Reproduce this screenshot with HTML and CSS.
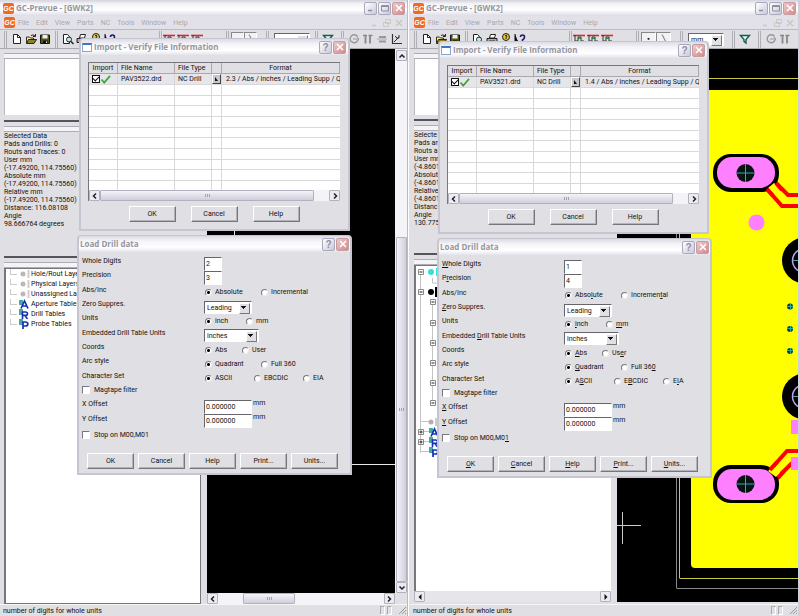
FILE: index.html
```html
<!DOCTYPE html>
<html lang="en">
<head>
<meta charset="utf-8">
<title>GC-Prevue</title>
<link rel="stylesheet" href="styles.css">
</head>
<body>
<svg class="defs" aria-hidden="true">
  <symbol id="new" viewBox="0 0 12 12"><path d="M2.5 1.5h4l3 3v6h-7z" fill="#fff" stroke="#222"/><path d="M6.500 1.500v3h3" fill="none" stroke="#222"/></symbol>
  <symbol id="open" viewBox="0 0 12 12"><path d="M1.500 10V4h3l1 1h3v2" fill="#ffe97a" stroke="#333"/><path d="M1.500 10.500l2-4h8l-2.500 4z" fill="#8c8420" stroke="#222"/><path d="M6 2.500q2-1.500 4 .5M10.500 1v2.500H8" fill="none" stroke="#222"/></symbol>
  <symbol id="save" viewBox="0 0 12 12"><path d="M1.500 2h9v8.500h-9z" fill="#555518" stroke="#111"/><path d="M3.500 2h5v3.500h-5z" fill="#eee"/><path d="M4 7.500h4.500v3H4z" fill="#111"/><path d="M7 8.500h1v1.500H7z" fill="#eee"/></symbol>
  <symbol id="preview" viewBox="0 0 12 12"><path d="M1.500 1.500h4l2 2v7h-6z" fill="#fff" stroke="#222"/><circle cx="7" cy="6.500" r="2.500" fill="#bfe6ea" stroke="#222"/><path d="M9 8.500l2.500 2.500" stroke="#222" stroke-width="1.500"/></symbol>
  <symbol id="print" viewBox="0 0 12 12"><path d="M3.500 5l1-3.500h5L8.500 5z" fill="#fff" stroke="#222"/><path d="M1 5.500h10v4H1z" fill="#aaa" stroke="#222"/><path d="M3 8h6" stroke="#333"/></symbol>
  <symbol id="about" viewBox="0 0 12 12"><circle cx="6" cy="4" r="3.500" fill="#e1c93a" stroke="#222"/><path d="M5 3q1-1.500 2 0L6 5v1" fill="none" stroke="#222"/><path d="M4 9h4v2H4z" fill="#222"/></symbol>
  <symbol id="help" viewBox="0 0 12 12"><path d="M1 1v8l2-2 2 4" fill="#111" stroke="#111"/><path d="M6.500 4q0-2 2-2t2 2-2 3v1M8.500 9v1.500" fill="none" stroke="#18186e" stroke-width="1.600"/></symbol>
  <symbol id="layer" viewBox="0 0 12 12"><path d="M0 2.500h12" stroke="#e0262c" stroke-width="1.600"/><path d="M2 2v6h3V4h3v4h3" fill="none" stroke="#333"/><path d="M5 5.500h3" stroke="#1c8b3c"/></symbol>
  <symbol id="filter" viewBox="0 0 12 12"><path d="M1.500 2.500h9l-3.500 4v3.500l-2-1.500v-2z" fill="#dff" stroke="#165a52" stroke-width="1.400"/></symbol>
  <symbol id="rotate" viewBox="0 0 12 12"><path d="M9.500 3.500a4 4 0 1 0 .5 3.500" fill="none" stroke="#999" stroke-width="1.400"/><path d="M5 6h6M9 4l2 2-2 2" fill="none" stroke="#999"/></symbol>
  <symbol id="mirror" viewBox="0 0 12 12"><path d="M1 2.500h4M6.500 2.500h4" stroke="#888" stroke-width="1.500"/><path d="M3.500 2v8.500M8 2v8.500" stroke="#888" stroke-width="1.800"/></symbol>
  <symbol id="flip" viewBox="0 0 12 12"><path d="M3 4h7M3 8.500h7" stroke="#999" stroke-width="2"/><path d="M1 6h10" stroke="#aaa"/></symbol>
  <symbol id="axes" viewBox="0 0 12 12"><path d="M2.500 1v9.500H12" fill="none" stroke="#333" stroke-width="1.200"/><path d="M4 9l5-5M5 3l3 3M9 2v3H6" fill="none" stroke="#333"/></symbol>
  <symbol id="leaf" viewBox="0 0 12 10"><circle cx="5" cy="5" r="2.500" fill="#b8b8b8"/><path d="M10.500 1v8" stroke="#dcc8c8" stroke-width="2"/></symbol>
  <symbol id="tab-a" viewBox="0 0 12 10"><path d="M1 1h4v5H1z" fill="#48a8a0"/><path d="M3 9.500L6.500 2l3.500 7.500M4.500 7h4" fill="none" stroke="#1530b4" stroke-width="1.700"/></symbol>
  <symbol id="tab-r" viewBox="0 0 12 10"><path d="M1 0h4v6H1z" fill="#48a8a0"/><path d="M4.500 10V3h3q2 0 2 1.700t-2 1.700h-3M7 6.500L9.500 10" fill="none" stroke="#1530b4" stroke-width="1.600"/></symbol>
  <symbol id="tab-p" viewBox="0 0 12 10"><path d="M1 0h4v6H1z" fill="#48a8a0"/><path d="M5 10V3h2.500q2.300 0 2.300 2T7.500 7H5" fill="none" stroke="#1530b4" stroke-width="1.700"/></symbol>
  <symbol id="left" viewBox="0 0 8 8"><path d="M5 1.500L2.500 4 5 6.500" fill="none" stroke="#222" stroke-width="1.500"/></symbol>
  <symbol id="right" viewBox="0 0 8 8"><path d="M3 1.500L5.500 4 3 6.500" fill="none" stroke="#222" stroke-width="1.500"/></symbol>
  <symbol id="solid-left" viewBox="0 0 8 8"><path d="M5.500 1v6L2.500 4z" fill="#111"/></symbol>
  <symbol id="solid-right" viewBox="0 0 8 8"><path d="M2.500 1v6L5.500 4z" fill="#111"/></symbol>
  <symbol id="up" viewBox="0 0 8 8"><path d="M1.500 5.500L4 3l2.500 2.500" fill="none" stroke="#222" stroke-width="1.500"/></symbol>
  <symbol id="down" viewBox="0 0 8 8"><path d="M1.500 2.500L4 5l2.500-2.500" fill="none" stroke="#222" stroke-width="1.500"/></symbol>
  <symbol id="min" viewBox="0 0 10 10"><path d="M2 7.500h4" stroke="currentColor" stroke-width="1.500"/></symbol>
  <symbol id="max" viewBox="0 0 10 10"><path d="M1.500 2.500h7v5.500h-7zM1.500 3.500h7" fill="none" stroke="currentColor"/></symbol>
  <symbol id="restore" viewBox="0 0 10 10"><path d="M3.500 1.500h5v4h-5zM1.500 4.500h5v4h-5z" fill="none" stroke="currentColor"/></symbol>
  <symbol id="close" viewBox="0 0 10 10"><path d="M2 2l6 6M8 2L2 8" stroke="currentColor" stroke-width="1.600"/></symbol>
  <symbol id="tick" viewBox="0 0 12 10"><path d="M1 5l3 3.500L10.500 1" fill="none" stroke="#3aa535" stroke-width="1.800"/></symbol>
  <symbol id="drill" viewBox="-12 -12 24 24"><circle r="9" fill="#061414"/><path d="M-9 0H9M0-9V9" stroke="#3fa3a8"/></symbol>
</svg>
<main class="desktop">

<section class="app app-first">
  <header class="titlebar"><span class="logo">GC</span><h1>GC-Prevue - [GWK2]</h1>
    <button class="cap" aria-label="Minimize"><svg><use href="#min"/></svg></button><button class="cap" aria-label="Maximize"><svg><use href="#max"/></svg></button><button class="cap cap-close" aria-label="Close"><svg><use href="#close"/></svg></button></header>
  <nav class="menubar"><span class="logo">GC</span><a href="#">File</a><a href="#">Edit</a><a href="#">View</a><a href="#">Parts</a><a href="#">NC</a><a href="#">Tools</a><a href="#">Window</a><a href="#">Help</a>
    <span class="mdi"><svg><use href="#min"/></svg><svg><use href="#restore"/></svg><svg><use href="#close"/></svg></span></nav>
  <div class="toolbar">
    <div class="tools"><button aria-label="New"><svg><use href="#new"/></svg></button><button aria-label="Open"><svg><use href="#open"/></svg></button><button aria-label="Save"><svg><use href="#save"/></svg></button></div>
    <div class="tools tools-file"><button aria-label="Preview"><svg><use href="#preview"/></svg></button><button aria-label="Print"><svg><use href="#print"/></svg></button><button aria-label="About"><svg><use href="#about"/></svg></button><button aria-label="Help"><svg><use href="#help"/></svg></button></div>
    <div class="tools tools-layers"><button aria-label="Layer 1"><svg><use href="#layer"/></svg></button><button aria-label="Layer 2"><svg><use href="#layer"/></svg></button><button aria-label="Layer 3"><svg><use href="#layer"/></svg></button></div>
    <div class="tools tools-shape"><button class="toggle" aria-label="Pad">&#9642;</button><button class="toggle" aria-label="Line">&#9586;</button></div>
    <div class="tools tools-unit"><span class="drop"><select aria-label="Unit"><option>mm</option></select></span></div>
    <div class="tools tools-filter"><button aria-label="Filter"><svg><use href="#filter"/></svg></button></div>
    <div class="tools"><button aria-label="Rotate"><svg><use href="#rotate"/></svg></button><button aria-label="Mirror"><svg><use href="#mirror"/></svg></button><button aria-label="Flip"><svg><use href="#flip"/></svg></button><button aria-label="Axes"><svg><use href="#axes"/></svg></button></div>
  </div>
  <div class="work">
    <aside class="side">
      <div class="pane pane-view"><div class="view"></div></div>
      <div class="pane pane-info"><p>Selected Data<br>Pads and Drills: 0<br>Routs and Traces: 0<br>User mm<br>(-17.49200, 114.75560)<br>Absolute mm<br>(-17.49200, 114.75560)<br>Relative mm<br>(-17.49200, 114.75560)<br>Distance: 116.08108<br>Angle<br>98.666764 degrees</p></div>
      <div class="pane pane-tree"><ul class="tree">
        <li><svg><use href="#leaf"/></svg>Hole/Rout Laye</li>
        <li><svg><use href="#leaf"/></svg>Physical Layers</li>
        <li><svg><use href="#leaf"/></svg>Unassigned La</li>
        <li><svg><use href="#tab-a"/></svg>Aperture Tables</li>
        <li><svg><use href="#tab-r"/></svg>Drill Tables</li>
        <li><svg><use href="#tab-p"/></svg>Probe Tables</li>
      </ul></div>
    </aside>
    <div class="board">
      <svg class="plot"><g transform="translate(-207 -49)" stroke="#e8e8e8"><path d="M207 464.500H396M234.500 49V464"/></g></svg>
      <div class="bar bar-v"><button aria-label="Scroll up"><svg><use href="#up"/></svg></button><i class="track"></i><i class="thumb"></i><button aria-label="Scroll down"><svg><use href="#down"/></svg></button></div>
      <div class="bar bar-h"><button aria-label="Scroll left"><svg><use href="#left"/></svg></button><i class="track"></i><i class="thumb"></i><i class="track track-rest"></i><button aria-label="Scroll right"><svg><use href="#right"/></svg></button></div>
    </div>
  </div>
  <footer class="status"><span>number of digits for whole units</span><i class="cell"></i><i class="cell"></i><svg class="grip"><path d="M1 8l7-7M4 8l4-4M7 8l1-1" stroke="#999"/></svg></footer>

  <section class="dialog import">
    <header class="dialog-title"><i class="form-icon"></i><h2>Import - Verify File Information</h2><button class="cap cap-help" aria-label="Help">?</button><button class="cap cap-close" aria-label="Close"><svg><use href="#close"/></svg></button></header>
    <div class="list">
      <div class="rows"><table>
        <thead><tr><th class="c1">Import</th><th class="c2">File Name</th><th class="c3">File Type</th><th class="c4"></th><th class="c5">Format</th></tr></thead>
        <tbody>
          <tr class="file"><td><input type="checkbox" class="mark" aria-label="Import PAV3522.drd" checked><svg class="tick"><use href="#tick"/></svg></td><td>PAV3522.drd</td><td>NC Drill</td><td><button class="more" aria-label="Edit format"></button></td><td>2.3 / Abs / inches / Leading Supp / Q</td></tr>
          <tr><td></td><td></td><td></td><td></td><td></td></tr><tr><td></td><td></td><td></td><td></td><td></td></tr><tr><td></td><td></td><td></td><td></td><td></td></tr><tr><td></td><td></td><td></td><td></td><td></td></tr><tr><td></td><td></td><td></td><td></td><td></td></tr><tr><td></td><td></td><td></td><td></td><td></td></tr><tr><td></td><td></td><td></td><td></td><td></td></tr><tr><td></td><td></td><td></td><td></td><td></td></tr><tr><td></td><td></td><td></td><td></td><td></td></tr><tr><td></td><td></td><td></td><td></td><td></td></tr>
        </tbody>
      </table></div>
      <div class="bar bar-h list-bar"><button aria-label="Scroll left"><svg><use href="#left"/></svg></button><i class="thumb"></i><i class="track"></i><button aria-label="Scroll right"><svg><use href="#right"/></svg></button></div>
    </div>
    <div class="actions"><button class="push">OK</button><button class="push">Cancel</button><button class="push">Help</button></div>
  </section>

  <section class="dialog load">
    <header class="dialog-title"><h2>Load Drill data</h2><button class="cap cap-help" aria-label="Help">?</button><button class="cap cap-close" aria-label="Close"><svg><use href="#close"/></svg></button></header>
    <form class="fields">
      <label for="a-whole">Whole Digits</label><div class="ctl"><input class="text digit" id="a-whole" value="2"></div>
      <label for="a-prec">Precision</label><div class="ctl"><input class="text digit" id="a-prec" value="3"></div>
      <span>Abs/Inc</span><div class="ctl opts opts-wide"><label><input type="radio" name="a-abs" checked>Absolute</label><label><input type="radio" name="a-abs">Incremental</label></div>
      <label for="a-zero">Zero Suppres.</label><div class="ctl"><span class="drop drop-zero"><select id="a-zero"><option>Leading</option></select></span></div>
      <span>Units</span><div class="ctl opts opts-mid"><label><input type="radio" name="a-unit" checked>inch</label><label><input type="radio" name="a-unit">mm</label></div>
      <label for="a-tab">Embedded Drill Table Units</label><div class="ctl"><span class="drop drop-units"><select id="a-tab"><option>inches</option></select></span></div>
      <span>Coords</span><div class="ctl opts opts-thin"><label><input type="radio" name="a-co" checked>Abs</label><label><input type="radio" name="a-co">User</label></div>
      <span>Arc style</span><div class="ctl opts opts-wide"><label><input type="radio" name="a-arc" checked>Quadrant</label><label><input type="radio" name="a-arc">Full 360</label></div>
      <span>Character Set</span><div class="ctl opts opts-three"><label><input type="radio" name="a-set" checked>ASCII</label><label><input type="radio" name="a-set">EBCDIC</label><label><input type="radio" name="a-set">EIA</label></div>
      <label class="check"><input type="checkbox" class="box">Magtape filter</label>
      <label for="a-x">X Offset</label><div class="ctl"><input class="text amount" id="a-x" value="0.000000"><span class="unit">mm</span></div>
      <label for="a-y">Y Offset</label><div class="ctl"><input class="text amount" id="a-y" value="0.000000"><span class="unit">mm</span></div>
      <label class="check check-stop"><input type="checkbox" class="box">Stop on M00,M01</label>
    </form>
    <div class="actions"><button class="push">OK</button><button class="push">Cancel</button><button class="push">Help</button><button class="push">Print...</button><button class="push">Units...</button></div>
  </section>
</section>

<section class="app app-second">
  <header class="titlebar"><span class="logo">GC</span><h1>GC-Prevue - [GWK2]</h1>
    <button class="cap" aria-label="Minimize"><svg><use href="#min"/></svg></button><button class="cap" aria-label="Maximize"><svg><use href="#max"/></svg></button><button class="cap cap-close" aria-label="Close"><svg><use href="#close"/></svg></button></header>
  <nav class="menubar"><span class="logo">GC</span><a href="#">File</a><a href="#">Edit</a><a href="#">View</a><a href="#">Parts</a><a href="#">NC</a><a href="#">Tools</a><a href="#">Window</a><a href="#">Help</a>
    <span class="mdi"><svg><use href="#min"/></svg><svg><use href="#restore"/></svg><svg><use href="#close"/></svg></span></nav>
  <div class="toolbar">
    <div class="tools"><button aria-label="New"><svg><use href="#new"/></svg></button><button aria-label="Open"><svg><use href="#open"/></svg></button><button aria-label="Save"><svg><use href="#save"/></svg></button></div>
    <div class="tools tools-file"><button aria-label="Preview"><svg><use href="#preview"/></svg></button><button aria-label="Print"><svg><use href="#print"/></svg></button><button aria-label="About"><svg><use href="#about"/></svg></button><button aria-label="Help"><svg><use href="#help"/></svg></button></div>
    <div class="tools tools-layers"><button aria-label="Layer 1"><svg><use href="#layer"/></svg></button><button aria-label="Layer 2"><svg><use href="#layer"/></svg></button><button aria-label="Layer 3"><svg><use href="#layer"/></svg></button></div>
    <div class="tools tools-shape"><button class="toggle" aria-label="Pad">&#9642;</button><button class="toggle" aria-label="Line">&#9586;</button></div>
    <div class="tools tools-unit"><span class="drop"><select aria-label="Unit"><option>mm</option></select></span></div>
    <div class="tools tools-filter"><button aria-label="Filter"><svg><use href="#filter"/></svg></button></div>
    <div class="tools"><button aria-label="Rotate"><svg><use href="#rotate"/></svg></button><button aria-label="Mirror"><svg><use href="#mirror"/></svg></button></div>
  </div>
  <div class="work">
    <aside class="side">
      <div class="pane pane-view"><div class="view"></div></div>
      <div class="pane pane-info"><p>Selecte<br>Pads an<br>Routs a<br>User mm<br>(-4.8601<br>Absolut<br>(-4.8601<br>Relative<br>(-4.8601<br>Distanc<br>Angle<br>130.775</p></div>
      <div class="pane pane-tree">
        <svg class="branches">
          <g transform="translate(-2 0)">
          <g fill="none" stroke="#c4c4c4"><path d="M6.500 5v182M18.500 36v102M6 155.500h10M6 165.500h10M6 175.500h10M6 185.500h10M18.500 12v5h6"/></g>
          <circle cx="17" cy="6" r="3" fill="#35e0dc"/><path d="M22 2h3v8h-3z" fill="#35e0dc"/>
          <circle cx="17" cy="26" r="3"/><path d="M21 21h4v10h-4z"/>
          <circle cx="17" cy="156" r="2.500" fill="#b0b0b0"/><path d="M21 152h4v8h-4z" fill="#ccc"/>
          <g fill="#fff" stroke="#888"><path d="M4.500 3.500h5v5h-5zM4.500 23.500h5v5h-5zM16.500 33.500h5v5h-5zM16.500 54.500h5v5h-5zM16.500 74.500h5v5h-5zM16.500 94.500h5v5h-5zM16.500 114.500h5v5h-5zM16.500 134.500h5v5h-5zM4.500 163.500h5v5h-5zM4.500 173.500h5v5h-5z"/></g>
          <path stroke="#222" d="M5.500 6h3M5.500 26h3M17.500 36h3M17.500 57h3M17.500 77h3M17.500 97h3M17.500 117h3M17.500 137h3M5.500 166h3M7 164.500v3M5.500 176h3M7 174.500v3"/>
          <use href="#tab-a" x="14" y="161" width="12" height="10"/><use href="#tab-r" x="14" y="171" width="12" height="10"/><use href="#tab-p" x="14" y="181" width="12" height="10"/>
          </g>
        </svg>
        <div class="bar bar-h tree-bar"><button aria-label="Scroll left"><svg><use href="#solid-left"/></svg></button><i class="thumb plain"></i><button aria-label="Scroll right"><svg><use href="#solid-right"/></svg></button></div>
      </div>
    </aside>
    <div class="board">
      <svg class="plot"><g transform="translate(-617 -49)">
        <path d="M676.500 588.500H800M676.500 230V588" stroke="#8a8a8a" fill="none"/>
        <path d="M679.500 578.500H800M679.500 78.500V578M679.500 78.500H800" stroke="#c9c942" fill="none"/>
        <rect x="691" y="90" width="130" height="478" rx="4" fill="#ff0"/>
        <path d="M775 182l13 13h14M766 188l16 18h20M770 470l17-19h15M777 478l17-17h8" fill="none" stroke="#f00" stroke-width="4"/>
        <g><rect x="713" y="154" width="66" height="38" rx="18"/><rect x="717" y="157" width="58" height="31" rx="15" fill="#ff80ff"/><use href="#drill" x="733.500" y="161" width="24" height="24"/>
        <rect x="713" y="465" width="66" height="38" rx="18"/><rect x="717" y="469" width="58" height="31" rx="15" fill="#ff80ff"/><use href="#drill" x="733.500" y="472" width="24" height="24"/></g>
        <path d="M768 188l6-5 6 5-5 6zM768 471l6-5 6 7-4 4z" fill="#ff0"/>
        <path d="M776 183l6 7M767 189l6 7M770 470l7-8M778 478l6-7" stroke="#f00" stroke-width="4"/>
        <circle cx="756.500" cy="222.500" r="8" fill="#ff80ff"/>
        <circle cx="805" cy="260.500" r="23"/><circle cx="805" cy="396.500" r="23"/>
        <g fill="none" stroke="#b9a5ee" stroke-width="1.500"><ellipse cx="805" cy="260.500" rx="12.500" ry="12"/><ellipse cx="805" cy="396.500" rx="12.500" ry="12"/></g>
        <path d="M793 260.500h6M793 396.500h6" stroke="#3fa3a8"/>
        <g fill="#0b3f3c"><circle cx="790" cy="306.500" r="3"/><circle cx="790" cy="329" r="3"/><circle cx="790" cy="351" r="3"/></g>
        <path d="M787 306.500h6M790.500 303v7M787 328.500h6M790.500 326v6M787 350.500h6M790.500 348v6" stroke="#2ea89d"/>
        <path d="M791 420h8v14h-8zM791 457h8v13h-8z" fill="#ff80ff"/>
        <path d="M617 525.500h24M622.500 512v32" stroke="#ccc"/>
      </g></svg>
    </div>
  </div>
  <footer class="status"><span>number of digits for whole units</span><i class="cell"></i><i class="cell"></i><svg class="grip"><path d="M1 8l7-7M4 8l4-4M7 8l1-1" stroke="#999"/></svg></footer>

  <section class="dialog import">
    <header class="dialog-title"><i class="form-icon"></i><h2>Import - Verify File Information</h2><button class="cap cap-help" aria-label="Help">?</button><button class="cap cap-close" aria-label="Close"><svg><use href="#close"/></svg></button></header>
    <div class="list">
      <div class="rows"><table>
        <thead><tr><th class="c1">Import</th><th class="c2">File Name</th><th class="c3">File Type</th><th class="c4"></th><th class="c5">Format</th></tr></thead>
        <tbody>
          <tr class="file"><td><input type="checkbox" class="mark" aria-label="Import PAV3521.drd" checked><svg class="tick"><use href="#tick"/></svg></td><td>PAV3521.drd</td><td>NC Drill</td><td><button class="more" aria-label="Edit format"></button></td><td>1.4 / Abs / inches / Leading Supp / Q</td></tr>
          <tr><td></td><td></td><td></td><td></td><td></td></tr><tr><td></td><td></td><td></td><td></td><td></td></tr><tr><td></td><td></td><td></td><td></td><td></td></tr><tr><td></td><td></td><td></td><td></td><td></td></tr><tr><td></td><td></td><td></td><td></td><td></td></tr><tr><td></td><td></td><td></td><td></td><td></td></tr><tr><td></td><td></td><td></td><td></td><td></td></tr><tr><td></td><td></td><td></td><td></td><td></td></tr><tr><td></td><td></td><td></td><td></td><td></td></tr><tr><td></td><td></td><td></td><td></td><td></td></tr>
        </tbody>
      </table></div>
      <div class="bar bar-h list-bar"><button aria-label="Scroll left"><svg><use href="#left"/></svg></button><i class="thumb"></i><i class="track"></i><button aria-label="Scroll right"><svg><use href="#right"/></svg></button></div>
    </div>
    <div class="actions"><button class="push">OK</button><button class="push">Cancel</button><button class="push">Help</button></div>
  </section>

  <section class="dialog load">
    <header class="dialog-title"><h2>Load Drill data</h2><button class="cap cap-help" aria-label="Help">?</button><button class="cap cap-close" aria-label="Close"><svg><use href="#close"/></svg></button></header>
    <form class="fields">
      <label for="b-whole"><u>W</u>hole Digits</label><div class="ctl"><input class="text digit" id="b-whole" value="1"></div>
      <label for="b-prec">P<u>r</u>ecision</label><div class="ctl"><input class="text digit" id="b-prec" value="4"></div>
      <span>Abs/Inc</span><div class="ctl opts opts-wide"><label><input type="radio" name="b-abs" checked>Abso<u>l</u>ute</label><label><input type="radio" name="b-abs">Incremen<u>t</u>al</label></div>
      <label for="b-zero"><u>Z</u>ero Suppres.</label><div class="ctl"><span class="drop drop-zero"><select id="b-zero"><option>Leading</option></select></span></div>
      <span>Units</span><div class="ctl opts opts-mid"><label><input type="radio" name="b-unit" checked><u>i</u>nch</label><label><input type="radio" name="b-unit"><u>m</u>m</label></div>
      <label for="b-tab">Embedded <u>D</u>rill Table Units</label><div class="ctl"><span class="drop drop-units"><select id="b-tab"><option>inches</option></select></span></div>
      <span>Coords</span><div class="ctl opts opts-thin"><label><input type="radio" name="b-co" checked><u>A</u>bs</label><label><input type="radio" name="b-co">Us<u>e</u>r</label></div>
      <span>Arc style</span><div class="ctl opts opts-wide"><label><input type="radio" name="b-arc" checked><u>Q</u>uadrant</label><label><input type="radio" name="b-arc">Full 36<u>0</u></label></div>
      <span>Character Set</span><div class="ctl opts opts-three"><label><input type="radio" name="b-set" checked>A<u>S</u>CII</label><label><input type="radio" name="b-set">E<u>B</u>CDIC</label><label><input type="radio" name="b-set">E<u>I</u>A</label></div>
      <label class="check"><input type="checkbox" class="box">Magtape filter</label>
      <label for="b-x"><u>X</u> Offset</label><div class="ctl"><input class="text amount" id="b-x" value="0.000000"><span class="unit">mm</span></div>
      <label for="b-y"><u>Y</u> Offset</label><div class="ctl"><input class="text amount" id="b-y" value="0.000000"><span class="unit">mm</span></div>
      <label class="check check-stop"><input type="checkbox" class="box">Stop on M00,M0<u>1</u></label>
    </form>
    <div class="actions"><button class="push"><u>O</u>K</button><button class="push"><u>C</u>ancel</button><button class="push"><u>H</u>elp</button><button class="push"><u>P</u>rint...</button><button class="push"><u>U</u>nits...</button></div>
  </section>
</section>
</main>
</body>
</html>
```
FILE: styles.css
```css
* { box-sizing: border-box; }
html, body { height: 100%; }
body {
  margin: 0;
  background: #e0dfe3;
  color: #111;
  font: 7px/10px Roboto, "Liberation Sans", sans-serif;
  overflow: hidden;
}
button, input, select { font: inherit; color: inherit; margin: 0; padding: 0; border: 0; }
svg { display: block; flex: none; width: 12px; height: 12px; }
i { display: block; }
a { color: inherit; text-decoration: none; }
h1, h2, p, ul { margin: 0; padding: 0; }
.defs { position: absolute; width: 0; height: 0; }

.desktop { display: grid; grid-template-columns: 51% 1fr; height: 100%; }
.app { position: relative; display: flex; flex-direction: column; min-width: 0; background: #e0dfe3; }
.app-first { border-right: 1px solid #b9b8c4; }
.app-second { border-left: 1px solid #fff; border-right: 2px solid #d0cfda; padding-left: 1px; }

/* Window frame */
.titlebar {
  display: flex; align-items: center; gap: 1px; height: 16px; padding: 0 2px 0 3px;
  background: linear-gradient(#d4d3de, #f4f4f8 25%, #fff 60%, #dddce6);
}
.titlebar h1, .dialog-title h2 { flex: 1; font: bold 8px/12px "Open Sans", sans-serif; color: #96969e; white-space: nowrap; }
.titlebar h1 { padding-left: 1px; }
.logo {
  width: 11px; height: 11px; border-radius: 2px; background: #ee6a22; color: #fff;
  font: italic bold 7px/11px "Liberation Sans", sans-serif; text-align: center;
}
.cap {
  display: flex; align-items: center; justify-content: center; width: 13px; height: 13px;
  border: 1px solid #a9a9bd; border-radius: 2px; background: linear-gradient(135deg, #fff, #c9c9da); color: #8e8ea0;
}
.cap svg { width: 10px; height: 10px; }
.cap-help { font: bold 10px/11px "Liberation Sans", sans-serif; }
.cap-close { border-color: #c79ba0; background: linear-gradient(135deg, #eccaca, #d3888a); color: #fff; }
.menubar { display: flex; align-items: center; gap: 7px; height: 13px; padding: 0 3px 0 4px; color: #a9a8aa; background: #e2e1ea; }
.menubar .logo { margin-right: -4px; }
.mdi { display: flex; gap: 2px; margin-left: auto; color: #c6cabf; }
.mdi svg { width: 10px; height: 10px; }

/* Toolbar */
.toolbar { display: flex; align-items: center; height: 20px; padding-left: 4px; border-top: 1px solid #bbbac2; border-bottom: 1px solid #aaa9b0; overflow: hidden; }
.tools { display: flex; align-items: center; flex: none; height: 17px; padding: 0 3px; border-left: 3px double #b0afb8; }
.tools button { display: flex; align-items: center; justify-content: center; width: 14px; height: 14px; background: none; }
.tools-file { padding-right: 42px; }
.tools-layers { padding: 0 22px 0 0; }
.tools-shape { padding: 0 9px 0 2px; }
.tools .toggle { width: 13px; border: 1px solid; border-color: #888 #fff #fff #888; background: #f2f2f4; }
.tools-unit { padding: 0 5px 0 5px; }
.tools-unit .drop { width: 36px; }
.tools-filter { padding-right: 6px; }
.app-second .tools .toggle { width: 15px; }
.app-second .tools-unit { padding-right: 8px; }

/* Work area */
.work { display: flex; flex: 1; min-height: 0; }
.side { display: flex; flex-direction: column; flex: none; width: 207px; padding: 0 6px 0 4px; }
.pane { position: relative; padding-top: 10px; }
.pane::before { content: ""; position: absolute; top: 4px; left: 0; right: 0; height: 4px; border: 1px solid #aeadb6; border-width: 1px 0; background: #f4f4f6; }
.pane-view { height: 73px; border-bottom: 2px solid #55545c; }
.view { height: 56px; background: #fff; border-left: 1px solid #bbb; }
.pane-info { height: 136px; border-bottom: 2px solid #55545c; line-height: 8px; }
.pane-info p { white-space: nowrap; }
.pane-tree { display: flex; flex: 1; flex-direction: column; }
.tree { flex: 1; list-style: none; padding-left: 4px; background: #fff; border: 1px solid #77767e; border-width: 1px 1px 1px 2px; }
.tree li { display: flex; gap: 1px; height: 10px; white-space: nowrap; }
.tree li svg { height: 10px; }
.tree li::before { content: ""; width: 6px; border-left: 1px solid #ccc; border-bottom: 1px solid #ccc; height: 5px; }
.branches { flex: 1; width: 100%; background: #fff; border: solid #77767e; border-width: 1px 0 0 2px; }
.app-second .pane-view { height: 72px; }
.app-second .pane-info { height: 134px; }
.app-second .pane-tree { padding-bottom: 2px; }
.board { display: grid; flex: 1; grid-template-columns: 1fr auto; grid-template-rows: 1fr auto; min-width: 0; }
.plot { width: 100%; height: 100%; min-height: 0; background: #000; }
.app-second .board { padding-bottom: 2px; }

/* Scroll bars */
.bar { display: flex; background: #f3f3f8; }
.bar button { display: flex; align-items: center; justify-content: center; flex: none; width: 11px; height: 11px; border: 1px solid #b2b1be; border-radius: 1px; background: #ecebf2; }
.bar svg { width: 8px; height: 8px; }
.bar .track { flex: 1; }
.thumb { display: flex; align-items: center; justify-content: center; border: 1px solid #b2b1be; border-radius: 1px; background: linear-gradient(#f4f4f9, #cfcedb); }
.thumb::after { content: ""; width: 5px; height: 3px; background: repeating-linear-gradient(90deg, #a4a3b0 0 1px, transparent 1px 2px); }
.bar-v { flex-direction: column; width: 12px; padding: 1px 0 0 1px; }
.bar-v .track { flex: 180; }
.bar-v .thumb { flex: 350; background: linear-gradient(90deg, #f4f4f9, #cfcedb); }
.bar-h { height: 11px; }
.board .bar-h .track { flex: 26; }
.board .bar-h .thumb { flex: 51; }
.board .bar-h .track-rest { flex: 91; }
.list-bar .thumb { flex: 216; }
.list-bar .track { flex: 15; }
.tree-bar .thumb { flex: 1; }
.plain { border: 0; background: #e6e5ea; }
.plain::after { display: none; }

/* Status bar */
.status { display: flex; align-items: center; height: 12px; padding-left: 3px; border-top: 1px solid #f6f6f8; }
.status span { flex: 1; white-space: nowrap; }
.cell { width: 5px; height: 9px; margin-right: 2px; border: 1px solid; border-color: #aaa #fff #fff #aaa; }
.grip { width: 9px; height: 9px; margin-left: 4px; }

/* Dialogs */
.dialog { position: absolute; display: flex; flex-direction: column; background: #e0dfe3; border: 1px solid #c6c5d2; border-width: 1px 2px 2px; border-radius: 4px 4px 0 0; }
.import { left: 79px; top: 38px; width: 271px; padding: 0 8px 7px 7px; }
.load { left: 77px; top: 235px; width: 275px; }
.app-second .import { left: 29px; top: 41px; }
.app-second .load { left: 28px; top: 238px; }
.dialog-title { display: flex; align-items: center; gap: 1px; height: 16px; padding: 0 1px 0 1px; border-radius: 4px 4px 0 0; background: linear-gradient(#dcdbe5, #f6f6fa 35%, #fff 70%, #e4e3ec); }
.import .dialog-title { margin: 0 -8px 7px -7px; padding-right: 2px; }
.form-icon { width: 10px; height: 9px; margin-right: 1px; background: #fff; border: 1px solid #8aa6cc; border-top: 2px solid #3f76bd; }
.list { border: 1px solid #77767e; border-width: 1px 0 0 1px; background: #fff; }
.rows { height: 127px; overflow: hidden; }
table { width: 100%; border-collapse: separate; border-spacing: 0; table-layout: fixed; }
th, td { height: 11px; padding: 0; border: solid #d9d9dc; border-width: 0 1px 1px 0; line-height: 9px; white-space: nowrap; overflow: hidden; text-align: left; font-weight: normal; }
th { background: #e0dfe3; border-color: #aaa9b2; }
th.c1, th.c5 { text-align: center; }
tr:nth-child(3n) td { height: 10px; }
.file td { background: #e6e5e9; }
.c1 { width: 29px; }
.c2 { width: 57px; }
.c3 { width: 37px; }
.c4 { width: 10px; }
th.c2, th.c3, td:nth-child(2), td:nth-child(3) { padding-left: 3px; }
td:nth-child(5) { padding-left: 4px; border-right: 0; }
.mark { appearance: none; display: inline-block; width: 8px; height: 8px; margin-left: 3px; vertical-align: top; border: 1px solid #111; background: #fff; }
.mark:checked::after { content: ""; display: block; width: 5px; height: 3px; border: solid #111; border-width: 0 0 1px 1px; transform: rotate(-45deg); }
.tick { display: inline-block; width: 12px; height: 9px; vertical-align: top; }
.more { display: block; width: 9px; height: 10px; border: 1px solid; border-color: #fff #444 #444 #fff; background: #c8c7cc; }
.more::after { content: ""; display: block; width: 3px; height: 4px; margin-left: 2px; background: #111; clip-path: polygon(0 0, 100% 100%, 0 100%); }
.actions { display: flex; justify-content: center; gap: 15px; }
.import .actions { padding-top: 5px; }
.push { width: 47px; height: 16px; border: 1px solid; border-color: #fff #77767e #77767e #fff; background: #e0dfe3; box-shadow: inset -1px -1px #b4b3ba; }

/* Drill form */
.fields { display: grid; grid-template-columns: 122px 1fr; grid-auto-rows: 14px 14px 15px; padding: 2px 0 0 3px; white-space: nowrap; }
.fields > span, .fields > label { align-self: center; }
.ctl { display: flex; align-items: center; height: 14px; margin-top: 3px; }
.text { width: 48px; height: 14px; padding-left: 1px; border: 1px solid; border-color: #66656c #fff #fff #66656c; background: #fff; }
.digit { width: 18px; }
.unit { align-self: flex-start; margin-left: 1px; line-height: 6px; }
.opts label { display: flex; align-items: center; padding-left: 1px; }
.opts-wide { display: grid; grid-template-columns: 56px 1fr; }
.opts-mid { display: grid; grid-template-columns: 41px 1fr; }
.opts-thin { display: grid; grid-template-columns: 37px 1fr; }
.opts-three { display: grid; grid-template-columns: 49px 49px 1fr; }
input[type="radio"] { appearance: none; flex: none; width: 7px; height: 7px; margin-right: 3px; border: 1px solid; border-color: #777 #eee #eee #777; border-radius: 50%; background: #fff; }
input[type="radio"]:checked { background: radial-gradient(circle, #000 0 1px, #fff 2px); }
.drop { position: relative; display: block; height: 13px; }
.drop::after { content: ""; position: absolute; right: 2px; top: 2px; width: 9px; height: 9px; pointer-events: none; border: 1px solid; border-color: #fff #777 #777 #fff; background: linear-gradient(#111, #111) 1px 2px / 5px 1px no-repeat, linear-gradient(#111, #111) 2px 3px / 3px 1px no-repeat, linear-gradient(#111, #111) 3px 4px / 1px 1px no-repeat, #e0dfe3; }
.drop select { appearance: none; display: block; width: 100%; height: 100%; padding: 1px 0 0 2px; border: 1px solid; border-color: #66656c #fff #fff #66656c; background: #fff; border-radius: 0; }
.drop-zero { width: 48px; }
.drop-units { width: 55px; }
.check { grid-column: 1 / -1; display: flex; align-items: center; }
.fields > .check-stop { margin-top: 4px; }
.box { appearance: none; width: 8px; height: 8px; margin-right: 4px; border: 1px solid; border-color: #77767e #fff #fff #77767e; background: #fff; }
.load .actions { gap: 4px; padding: 13px 4px 4px 0; }
.load .actions .push { flex: none; }
```
